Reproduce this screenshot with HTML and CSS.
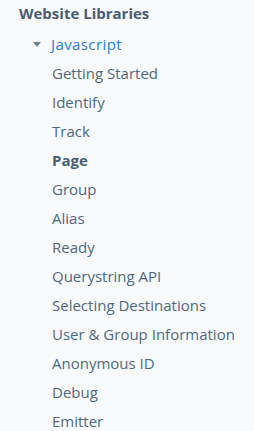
FILE: index.html
```html
<!DOCTYPE html>
<html>
<head>
<meta charset="utf-8">
<link rel="stylesheet" href="styles.css">
</head>
<body>
<nav class="sidebar">
  <div class="section-title">Website Libraries</div>
  <div class="group">
    <div class="group-head">
      <span class="caret"></span>
      <span class="group-label">Javascript</span>
    </div>
    <ul class="items">
      <li>Getting Started</li>
      <li>Identify</li>
      <li>Track</li>
      <li class="active">Page</li>
      <li>Group</li>
      <li>Alias</li>
      <li>Ready</li>
      <li>Querystring API</li>
      <li>Selecting Destinations</li>
      <li>User &amp; Group Information</li>
      <li>Anonymous ID</li>
      <li>Debug</li>
      <li>Emitter</li>
    </ul>
  </div>
</nav>
</body>
</html>
```
FILE: styles.css
```css
html, body {
  margin: 0;
  padding: 0;
  background: #f8fafb;
}
body {
  font-family: "Open Sans", Lato, sans-serif;
  -webkit-font-smoothing: antialiased;
}
.sidebar {
  padding: 0 0 0 19px;
}
.section-title {
  font-size: 15px;
  font-weight: 700;
  color: #4a5e72;
  line-height: 28px;
  margin-top: -1px;
}
.group-head {
  display: flex;
  align-items: center;
  height: 30px;
  margin-top: 2px;
  padding-left: 14px;
}
.caret {
  width: 0;
  height: 0;
  border-left: 4.5px solid transparent;
  border-right: 4.5px solid transparent;
  border-top: 5px solid #6f8193;
  margin-right: 10px;
}
.group-label {
  font-size: 15px;
  letter-spacing: 0.4px;
  color: #2b7fd3;
}
.items {
  list-style: none;
  margin: 0;
  padding: 0 0 0 33px;
}
.items li {
  font-size: 15px;
  line-height: 29px;
  color: #50697f;
}
.items li.active {
  font-weight: 700;
  color: #485f76;
}
```
